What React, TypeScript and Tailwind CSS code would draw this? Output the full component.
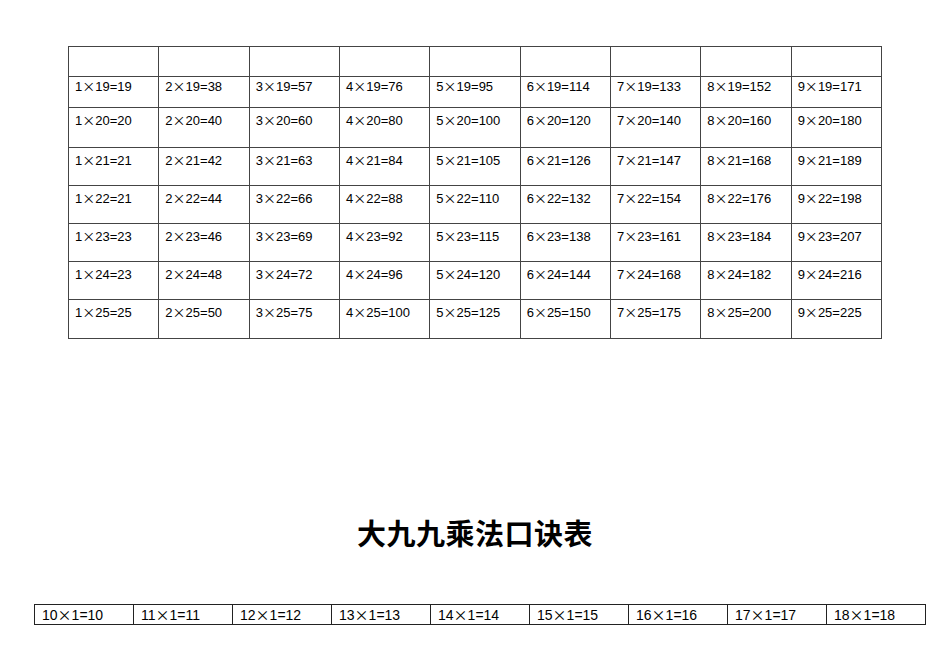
const FONT = '"Liberation Sans", "Noto Sans CJK SC", sans-serif';

const ROW_HEIGHTS = [30, 31, 40, 38, 38, 38, 38, 39];
const MULTS = [19, 20, 21, 22, 23, 24, 25];

// the source document has a couple of typos, keep them as they are
const fixes: Record<string, number> = { '1x22': 21, '1x24': 23, '8x24': 182 };

const product = (a: number, b: number) => fixes[`${a}x${b}`] ?? a * b;

const Formula = ({ a, b, c }: { a: number; b: number; c: number }) => (
  <>
    {a}
    <span style={{ fontFamily: '"Noto Sans CJK SC", sans-serif' }}>×</span>
    {b}={c}
  </>
);

const TopTable = () => (
  <table className="ml-[68px] mt-[46px] border-collapse table-fixed w-[814px]">
    <tbody>
      {ROW_HEIGHTS.map((h, r) => (
        <tr key={r} style={{ height: h }}>
          {Array.from({ length: 9 }, (_, c) => {
            const a = c + 1;
            const b = MULTS[r - 1];
            return (
              <td
                key={c}
                className={`border border-[#444] align-top pl-[6px] text-[13px] leading-[18px] text-black whitespace-nowrap ${
                  r === 1 ? 'pt-0' : 'pt-[3px]'
                }`}
              >
                {r === 0 ? '' : <Formula a={a} b={b} c={product(a, b)} />}
              </td>
            );
          })}
        </tr>
      ))}
    </tbody>
  </table>
);

const BottomTable = () => (
  <table className="ml-[34px] mt-[49px] border-collapse table-fixed w-[892px]">
    <tbody>
      <tr className="h-[20px]">
        {Array.from({ length: 9 }, (_, i) => {
          const n = i + 10;
          return (
            <td
              key={i}
              className="border border-[#222] pl-[7px] py-0 text-[14px] leading-[17px] text-black whitespace-nowrap"
            >
              <Formula a={n} b={1} c={n} />
            </td>
          );
        })}
      </tr>
    </tbody>
  </table>
);

export default function App() {
  return (
    <div className="w-[950px] h-[672px] bg-white overflow-hidden" style={{ fontFamily: FONT }}>
      <TopTable />
      <h1 className="mt-[176px] text-center text-[29px] leading-[40px] font-bold text-black tracking-[0.5px]">
        大九九乘法口诀表
      </h1>
      <BottomTable />
    </div>
  );
}
